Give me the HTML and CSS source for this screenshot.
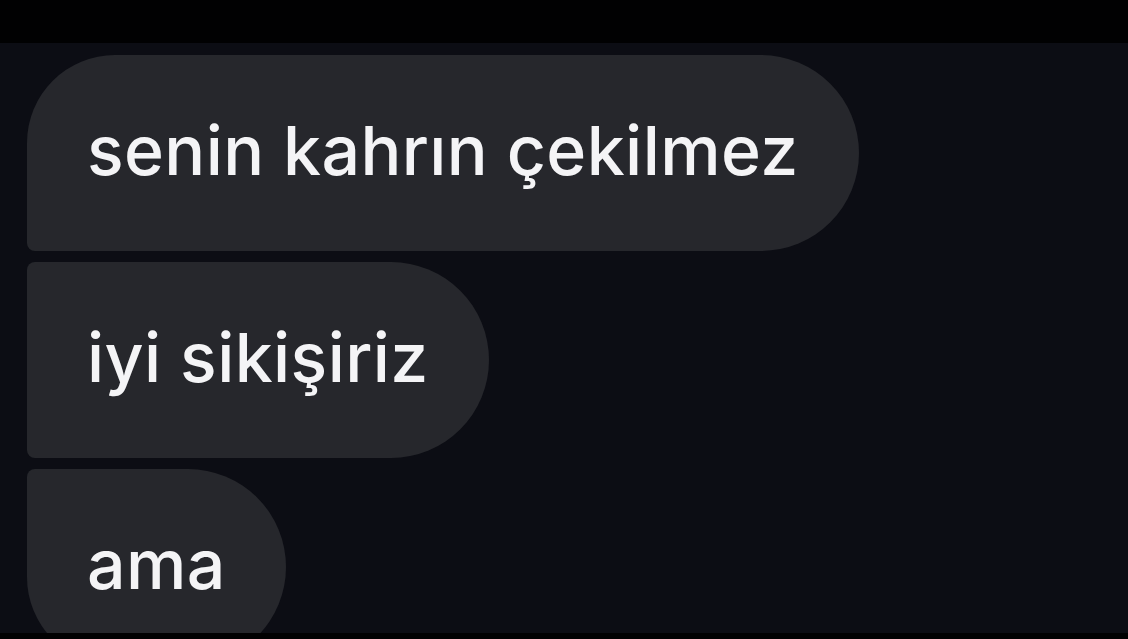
FILE: index.html
```html
<!DOCTYPE html>
<html lang="tr">
<head>
<meta charset="utf-8">
<title>Sohbet</title>
<link rel="stylesheet" href="styles.css">
</head>
<body>
<div class="screen">
  <div class="topbar"></div>
  <div class="thread">
    <div class="msg first">senin kahrın çekilmez</div>
    <div class="msg middle">iyi sikişiriz</div>
    <div class="msg last">ama</div>
  </div>
  <div class="bottombar"></div>
</div>
</body>
</html>
```
FILE: styles.css
```css
html, body {
  margin: 0;
  padding: 0;
  background: #000;
}
.screen {
  width: 1128px;
  height: 639px;
  display: flex;
  flex-direction: column;
  overflow: hidden;
  background: #000;
}
.topbar {
  height: 43px;
  flex: none;
  background: #010102;
}
.thread {
  flex: 1;
  min-height: 0;
  overflow: hidden;
  background: #0c0d14;
  display: flex;
  flex-direction: column;
  align-items: flex-start;
  gap: 11px;
  padding: 12px 0 0 27px;
}
.bottombar {
  height: 6px;
  flex: none;
  background: #010102;
}
.msg {
  flex: none;
  height: 196px;
  box-sizing: border-box;
  display: flex;
  align-items: center;
  padding: 0 60px 6px 60px;
  background: #26272c;
  color: #f4f4f6;
  font-family: Inter, "Liberation Sans", Arial, sans-serif;
  font-weight: 500;
  font-size: 68px;
  letter-spacing: 0.4px;
  border-radius: 0 98px 98px 0;
  white-space: nowrap;
}
.msg.first {
  border-radius: 88px 98px 98px 8px;
}
.msg.middle {
  border-radius: 8px 98px 98px 8px;
}
.msg.last {
  border-radius: 8px 98px 98px 88px;
}
```
